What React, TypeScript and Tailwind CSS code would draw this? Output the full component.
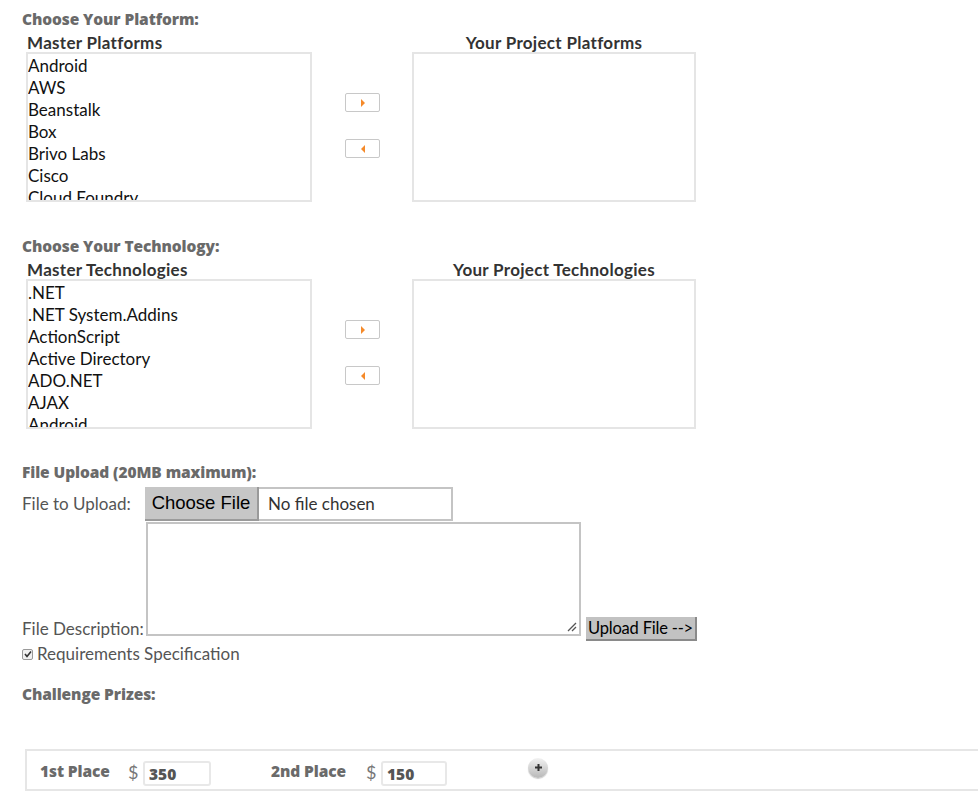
import React from "react";

const platforms = ["Android", "AWS", "Beanstalk", "Box", "Brivo Labs", "Cisco", "Cloud Foundry", "DocuSign"];
const techs = [".NET", ".NET System.Addins", "ActionScript", "Active Directory", "ADO.NET", "AJAX", "Android", "Apache"];

const HEAD = "h-[20px] leading-[20px] text-[15.5px] font-extrabold text-[#6a6a6a] tracking-[-0.1px] font-['Open_Sans',sans-serif]";

function ArrowBtn({ dir }: { dir: "r" | "l" }) {
  return (
    <div className="w-[35px] h-[19px] border border-[#c8c8c8] rounded-[2px] bg-white flex items-center justify-center">
      <svg width="6" height="8" viewBox="0 0 6 8">
        {dir === "r" ? <path d="M1 0 L5 4 L1 8 Z" fill="#f58a2a" /> : <path d="M5 0 L1 4 L5 8 Z" fill="#f58a2a" />}
      </svg>
    </div>
  );
}

function Picker({ title, left, right, items }: { title: string; left: string; right: string; items: string[] }) {
  return (
    <div>
      <div className={HEAD}>{title}</div>
      <div className="flex items-start mt-[4px]">
        <div className="ml-[4px] w-[286px]">
          <div className="h-[19px] leading-[19px] text-[17px] font-bold text-[#333] pl-[1px] tracking-[0.3px]">{left}</div>
          <div className="h-[150px] border-2 border-[#e5e5e5] overflow-hidden pt-[1px]">
            {items.map((t) => (
              <div key={t} className="h-[22px] leading-[22px] text-[17px] text-[#111]">{t}</div>
            ))}
          </div>
        </div>
        <div className="ml-[33px] pt-[60px] flex flex-col gap-[27px]">
          <ArrowBtn dir="r" />
          <ArrowBtn dir="l" />
        </div>
        <div className="ml-[32px] w-[284px]">
          <div className="h-[19px] leading-[19px] text-[17px] font-bold text-[#333] text-center tracking-[0.3px]">{right}</div>
          <div className="h-[150px] border-2 border-[#e5e5e5]" />
        </div>
      </div>
    </div>
  );
}

export default function App() {
  return (
    <div
      className="w-[978px] h-[800px] overflow-hidden bg-white pl-[22px] pt-[9px] relative"
      style={{ fontFamily: "Lato, 'Noto Sans', sans-serif" }}
    >
      <Picker title="Choose Your Platform:" left="Master Platforms" right="Your Project Platforms" items={platforms} />
      <div className="h-[34px]" />
      <Picker title="Choose Your Technology:" left="Master Technologies" right="Your Project Technologies" items={techs} />

      <div className={"mt-[33px] " + HEAD}>File Upload (20MB maximum):</div>
      <div className="mt-[5px] flex items-center h-[34px]">
        <div className="w-[123px] text-[17px] text-[#555]">File to Upload:</div>
        <div className="w-[308px] h-[34px] border-2 border-[#c4c4c4] flex items-stretch">
          <div
            className="w-[114px] bg-[#c6c6c6] border-r-2 border-b-2 border-[#9a9a9a] -ml-[2px] -mt-[2px] h-[34px] flex items-center justify-center text-[18.5px] text-black"
            style={{ fontFamily: "'Liberation Sans', Arial, sans-serif" }}
          >
            Choose File
          </div>
          <div className="pl-[9px] flex items-center text-[17px] text-[#333]">No file chosen</div>
        </div>
      </div>
      <div className="flex items-end mt-[1px]">
        <div className="w-[124px] text-[17px] text-[#555] leading-[20px] mb-[-3px]">File Description:</div>
        <div className="w-[435px] h-[114px] border-2 border-[#c4c4c4] relative">
          <svg className="absolute right-[2px] bottom-[2px]" width="12" height="12" viewBox="0 0 12 12">
            <path d="M11 3 L3 11 M11 7 L7 11" stroke="#555" strokeWidth="1.3" />
          </svg>
        </div>
        <div className="ml-[5px] mb-[-5px] w-[111px] h-[24px] bg-[#c2c2c2] border-r-2 border-b-2 border-[#8a8a8a] text-[16.5px] text-black leading-[22px] pl-[2px] whitespace-nowrap overflow-hidden tracking-[-0.2px]">
          Upload File --&gt;
        </div>
      </div>
      <div className="mt-[8px] flex items-center h-[20px]">
        <div className="w-[11px] h-[11px] border border-[#999] rounded-[2px] bg-[#f0f0f0] flex items-center justify-center">
          <svg width="8" height="8" viewBox="0 0 8 8">
            <path d="M1 4 L3 6.5 L7 1.5" stroke="#333" strokeWidth="1.6" fill="none" />
          </svg>
        </div>
        <span className="ml-[4px] text-[17px] text-[#555]">Requirements Specification</span>
      </div>
      <div className={"mt-[20px] " + HEAD}>Challenge Prizes:</div>

      <div className="mt-[45px] ml-[3px] w-[1000px] h-[42px] border-2 border-[#e6e6e6] flex items-center">
        <span className="ml-[13px] mt-[4px] w-[88px] text-[15.5px] font-extrabold tracking-[-0.1px] text-[#6a6a6a] font-['Open_Sans',sans-serif]">1st Place</span>
        <span className="mt-[4px] text-[18px] text-[#777] w-[15px]">$</span>
        <div className="w-[68px] h-[25px] border-2 border-[#e8e8e8] rounded-[3px] mt-[6px] pl-[4px] leading-[22px] text-[15.5px] font-extrabold text-[#555] font-['Open_Sans',sans-serif]">350</div>
        <span className="ml-[60px] mt-[4px] w-[95px] text-[15.5px] font-extrabold tracking-[-0.1px] text-[#6a6a6a] font-['Open_Sans',sans-serif]">2nd Place</span>
        <span className="mt-[4px] text-[18px] text-[#777] w-[15px]">$</span>
        <div className="w-[66px] h-[25px] border-2 border-[#e8e8e8] rounded-[3px] mt-[6px] pl-[4px] leading-[22px] text-[15.5px] font-extrabold text-[#555] font-['Open_Sans',sans-serif]">150</div>
        <div className="ml-[81px] -mt-[5px] w-[20px] h-[20px] rounded-full bg-gradient-to-b from-[#f2f2f2] to-[#b8b8b8] shadow-[0_1px_1px_rgba(0,0,0,0.2)] flex items-center justify-center">
          <svg width="9" height="9" viewBox="0 0 9 9">
            <path d="M4.5 1 V8 M1 4.5 H8" stroke="#333" strokeWidth="2" />
          </svg>
        </div>
      </div>
    </div>
  );
}
